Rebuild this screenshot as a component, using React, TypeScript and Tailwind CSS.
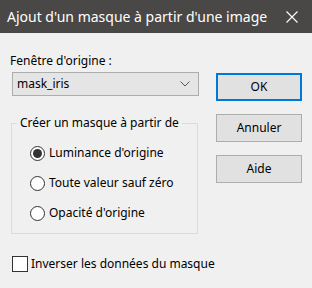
const font = "font-['Segoe_UI','Noto_Sans','Open_Sans',sans-serif]";

const Radio = ({ checked, label }: { checked?: boolean; label: string }) => (
  <div className="flex items-center h-[30px]">
    <span className="w-[15px] h-[15px] rounded-full border border-[#333] bg-white flex items-center justify-center">
      {checked && <span className="w-[9px] h-[9px] rounded-full bg-[#333]" />}
    </span>
    <span className="ml-[4px] text-[12px] text-black">{label}</span>
  </div>
);

const Button = ({ label, primary }: { label: string; primary?: boolean }) => (
  <button
    className={
      "w-[86px] h-[28px] bg-[#e1e1e1] text-[12px] text-black flex items-center justify-center " +
      (primary ? "border-2 border-[#0078d7]" : "border border-[#adadad]")
    }
  >
    {label}
  </button>
);

export default function App() {
  return (
    <div className={`w-[312px] h-[288px] bg-[#f0f0f0] flex flex-col ${font}`}>
      {/* Title bar */}
      <div className="h-[33px] bg-[#4a4846] flex items-center justify-between pl-[7px] pr-[14px]">
        <span className="text-[14px] text-white whitespace-nowrap">Ajout d'un masque à partir d'une image</span>
        <svg width="12" height="12" viewBox="0 0 12 12">
          <path d="M0.5 0.5 L11.5 11.5 M11.5 0.5 L0.5 11.5" stroke="#fff" strokeWidth="1.1" />
        </svg>
      </div>

      <div className="flex pl-[12px] pt-[20px]">
        <div className="w-[187px] flex flex-col">
          <span className="text-[12px] text-black -ml-[2px] leading-[16px]">Fenêtre d'origine :</span>
          <div className="mt-[3px] h-[24px] border border-[#adadad] bg-[#e5e5e5] flex items-center justify-between pl-[4px] pr-[8px]">
            <span className="text-[12px] text-black">mask_iris</span>
            <svg width="10" height="6" viewBox="0 0 10 6">
              <path d="M0.5 0.5 L5 5 L9.5 0.5" stroke="#555" strokeWidth="1" fill="none" />
            </svg>
          </div>

          {/* Group box */}
          <div className="relative mt-[27px] h-[111px] border border-[#dcdcdc] -ml-[1px] w-[187px]">
            <span className="absolute -top-[9px] left-[5px] px-[3px] bg-[#f0f0f0] text-[12px] text-black leading-[16px] whitespace-nowrap">
              Créer un masque à partir de
            </span>
            <div className="flex flex-col pl-[18px] pt-[14px]">
              <Radio checked label="Luminance d'origine" />
              <Radio label="Toute valeur sauf zéro" />
              <Radio label="Opacité d'origine" />
            </div>
          </div>

          <div className="flex items-center mt-[21px] whitespace-nowrap">
            <span className="shrink-0 w-[16px] h-[16px] border border-[#333] bg-white" />
            <span className="ml-[3px] text-[12px] text-black">Inverser les données du masque</span>
          </div>
        </div>

        <div className="ml-[17px] pt-[20px] flex flex-col gap-[13px]">
          <Button primary label="OK" />
          <Button label="Annuler" />
          <Button label="Aide" />
        </div>
      </div>
    </div>
  );
}
